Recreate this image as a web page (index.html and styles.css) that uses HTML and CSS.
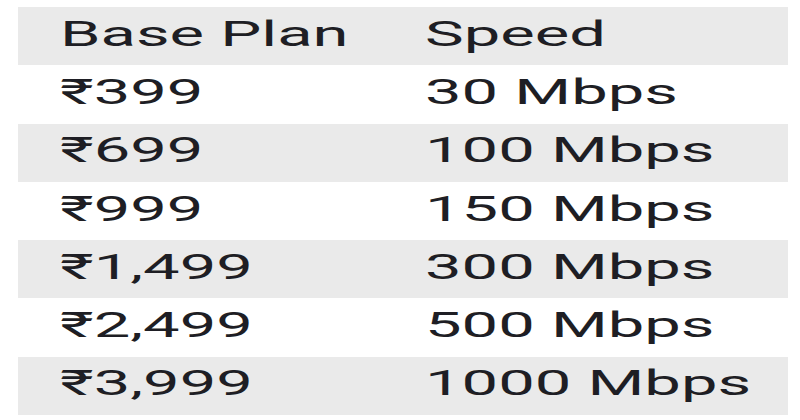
FILE: index.html
```html
<!DOCTYPE html>
<html lang="en">
<head>
<meta charset="utf-8">
<title>Plans</title>
<link rel="stylesheet" href="styles.css">
</head>
<body>
<div class="plans">
  <div class="row head"><div class="cell"><span class="txt">Base Plan</span></div><div class="cell"><span class="txt">Speed</span></div></div>
  <div class="row"><div class="cell"><span class="txt">₹399</span></div><div class="cell"><span class="txt">30 Mbps</span></div></div>
  <div class="row alt"><div class="cell"><span class="txt">₹699</span></div><div class="cell"><span class="txt">100 Mbps</span></div></div>
  <div class="row"><div class="cell"><span class="txt">₹999</span></div><div class="cell"><span class="txt">150 Mbps</span></div></div>
  <div class="row alt"><div class="cell"><span class="txt">₹1,499</span></div><div class="cell"><span class="txt">300 Mbps</span></div></div>
  <div class="row"><div class="cell"><span class="txt">₹2,499</span></div><div class="cell"><span class="txt">500 Mbps</span></div></div>
  <div class="row alt"><div class="cell"><span class="txt">₹3,999</span></div><div class="cell"><span class="txt">1000 Mbps</span></div></div>
</div>
</body>
</html>
```
FILE: styles.css
```css
html, body {
  margin: 0;
  padding: 0;
  background: #ffffff;
}
body {
  padding: 7px 12px 0 18px;
  font-family: Roboto, "Liberation Sans", "DejaVu Sans", sans-serif;
  color: #1e1e24;
  overflow: hidden;
}
.plans {
  display: grid;
  grid-auto-rows: 58.3px;
  width: 770px;
}
.row {
  display: grid;
  grid-template-columns: 365px 1fr;
  align-items: center;
}
.head, .alt {
  background: #eaeaea;
}
.cell {
  padding-left: 42px;
  font-size: 35px;
  line-height: 1;
  white-space: nowrap;
  padding-bottom: 4px;
}
.txt {
  display: inline-block;
  transform: scaleX(1.86);
  transform-origin: left center;
}
```
